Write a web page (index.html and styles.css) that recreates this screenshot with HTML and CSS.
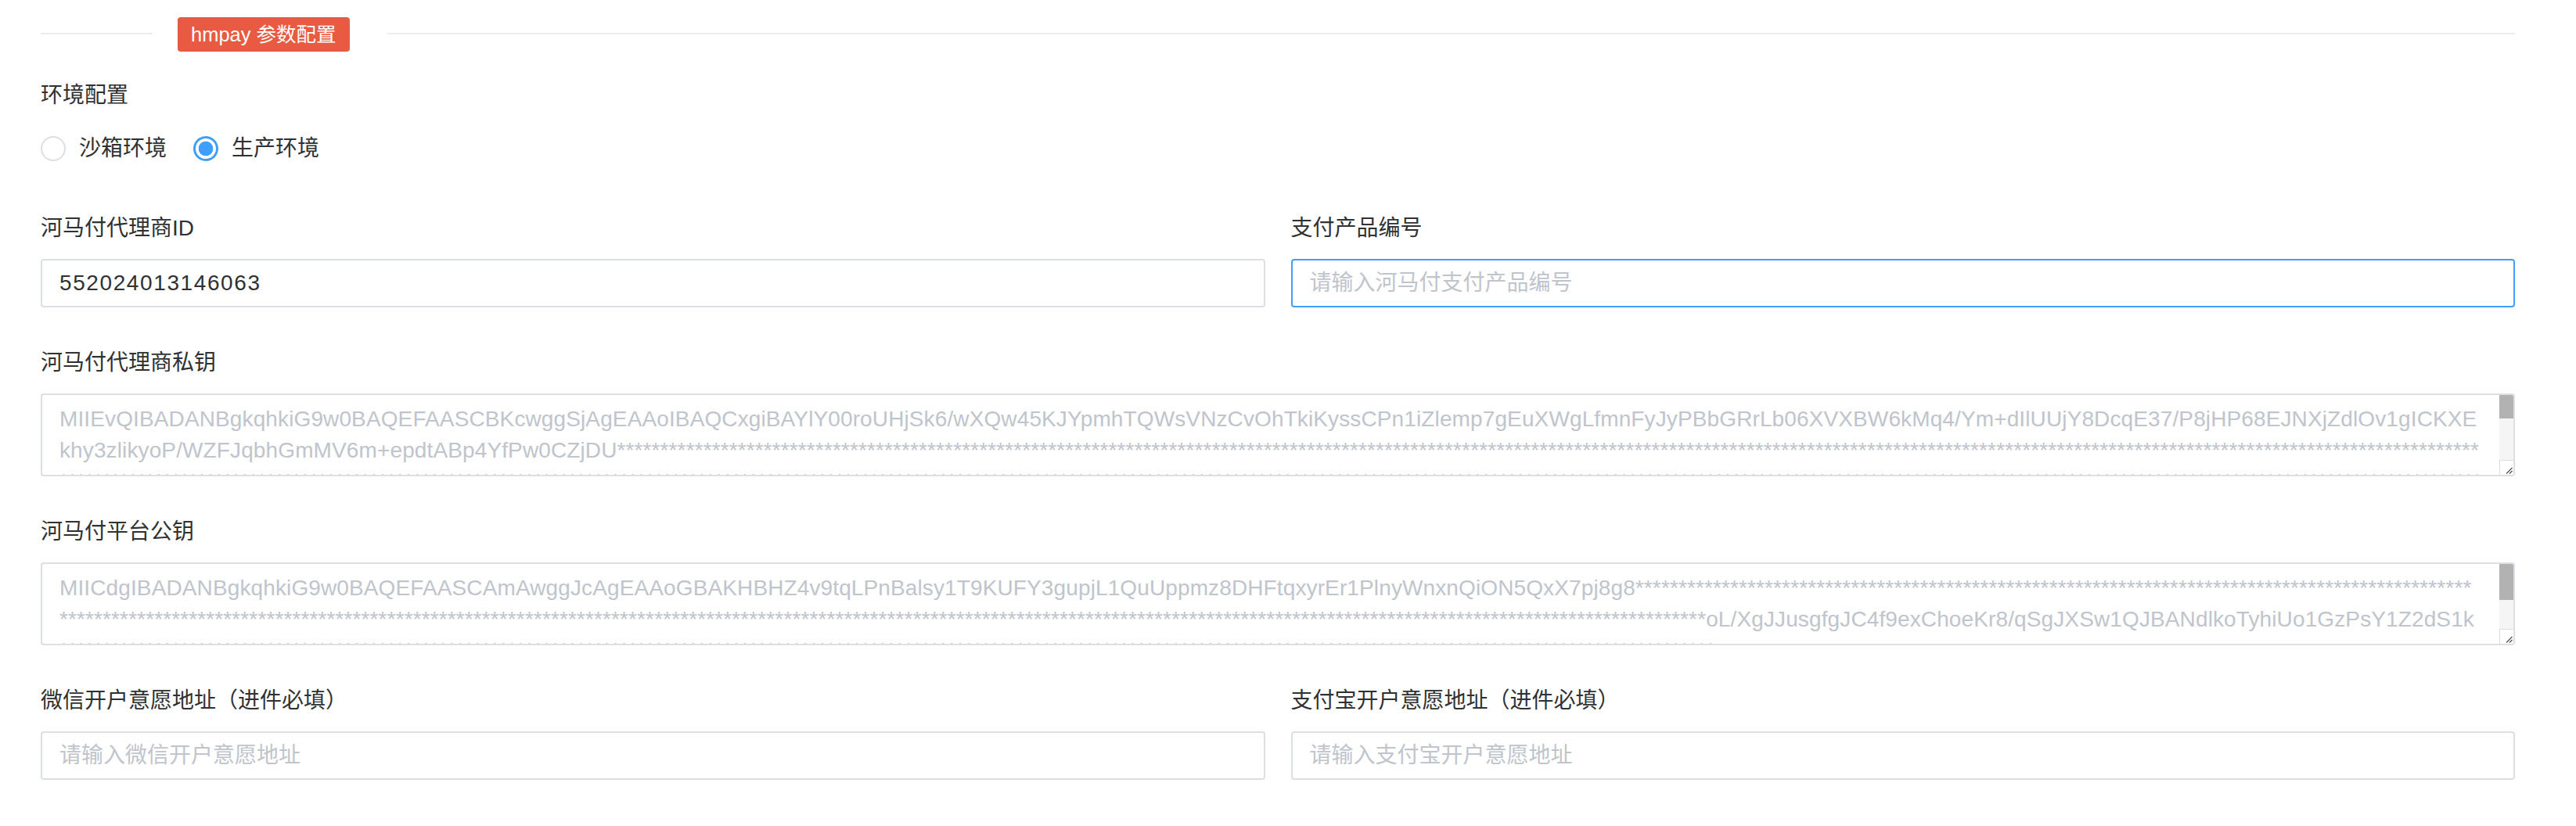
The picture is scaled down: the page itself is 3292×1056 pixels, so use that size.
FILE: index.html
```html
<!DOCTYPE html>
<html lang="zh-CN">
<head>
<meta charset="utf-8">
<title>hmpay 参数配置</title>
<link rel="stylesheet" href="styles.css">
</head>
<body>
<div class="page">
  <div class="divider">
    <span class="divider-line divider-line--lead"></span>
    <span class="divider-title">hmpay 参数配置</span>
    <span class="divider-line divider-line--rest"></span>
  </div>

  <div class="env">
    <div class="field-label">环境配置</div>
    <div class="radio-group">
      <label class="radio"><input type="radio" name="env" value="sandbox"><span>沙箱环境</span></label>
      <label class="radio"><input type="radio" name="env" value="production" checked><span>生产环境</span></label>
    </div>
  </div>

  <div class="form-grid">
    <div class="form-item">
      <label class="field-label" for="agentId">河马付代理商ID</label>
      <input class="text-input" id="agentId" type="text" value="552024013146063">
    </div>
    <div class="form-item">
      <label class="field-label" for="productNo">支付产品编号</label>
      <input class="text-input is-focus" id="productNo" type="text" placeholder="请输入河马付支付产品编号">
    </div>

    <div class="form-item form-item--wide">
      <label class="field-label" for="agentKey">河马付代理商私钥</label>
      <div class="key-box">
        <textarea class="key-area" id="agentKey" spellcheck="false">MIIEvQIBADANBgkqhkiG9w0BAQEFAASCBKcwggSjAgEAAoIBAQCxgiBAYlY00roUHjSk6/wXQw45KJYpmhTQWsVNzCvOhTkiKyssCPn1iZlemp7gEuXWgLfmnFyJyPBbGRrLb06XVXBW6kMq4/Ym+dIlUUjY8DcqE37/P8jHP68EJNXjZdlOv1gICKXE
khy3zlikyoP/WZFJqbhGmMV6m+epdtABp4YfPw0CZjDU************************************************************************************************************************************************************************************************************************************************************************************************************************************************************************************************************************************************************************************************************************************************************************************************************7Hq2xWbN0dKm4vRz8PuLs3TgYc1eQfJ9aXoE
Vn5kZr2Ti8LwQ0yA=</textarea>
        <div class="scrollbar" aria-hidden="true">
          <div class="scrollbar-track"><div class="scrollbar-thumb scrollbar-thumb--short"></div></div>
          <div class="resizer">
            <svg width="18" height="19" viewBox="0 0 18 19"><path d="M9 17.5 16.5 10M13 17.5 16.5 14" fill="none" stroke="#555" stroke-width="1.3"/></svg>
          </div>
        </div>
      </div>
    </div>

    <div class="form-item form-item--wide">
      <label class="field-label" for="platformKey">河马付平台公钥</label>
      <div class="key-box">
        <textarea class="key-area" id="platformKey" spellcheck="false">MIICdgIBADANBgkqhkiG9w0BAQEFAASCAmAwggJcAgEAAoGBAKHBHZ4v9tqLPnBalsy1T9KUFY3gupjL1QuUppmz8DHFtqxyrEr1PlnyWnxnQiON5QxX7pj8g8*************************************************************************************************
***********************************************************************************************************************************************************************************************oL/XgJJusgfgJC4f9exChoeKr8/qSgJXSw1QJBANdlkoTyhiUo1GzPsY1Z2dS1k
************************************************************************************************************************************************************************************************
Fq8tA2mWcR==</textarea>
        <div class="scrollbar" aria-hidden="true">
          <div class="scrollbar-track"><div class="scrollbar-thumb scrollbar-thumb--long"></div></div>
          <div class="resizer">
            <svg width="18" height="19" viewBox="0 0 18 19"><path d="M9 17.5 16.5 10M13 17.5 16.5 14" fill="none" stroke="#555" stroke-width="1.3"/></svg>
          </div>
        </div>
      </div>
    </div>

    <div class="form-item">
      <label class="field-label" for="wechatUrl">微信开户意愿地址（进件必填）</label>
      <input class="text-input" id="wechatUrl" type="text" placeholder="请输入微信开户意愿地址">
    </div>
    <div class="form-item">
      <label class="field-label" for="alipayUrl">支付宝开户意愿地址（进件必填）</label>
      <input class="text-input" id="alipayUrl" type="text" placeholder="请输入支付宝开户意愿地址">
    </div>
  </div>
</div>
</body>
</html>
```

FILE: styles.css
```css
html, body {
  margin: 0;
  background: #fff;
}

.page {
  padding: 22px 78px 40px 52px;
  font-family: "Liberation Sans", "Noto Sans CJK SC", sans-serif;
  color: #303133;
}

/* section divider with the red title tag */
.divider {
  display: flex;
  align-items: center;
  height: 44px;
}

.divider-line {
  height: 2px;
  background: #ececec;
  margin-bottom: 3px;
}

.divider-line--lead {
  width: 143px;
  margin-right: 32px;
}

.divider-line--rest {
  flex: 1;
  margin-left: 48px;
}

.divider-title {
  box-sizing: border-box;
  width: 220px;
  height: 44px;
  padding: 0 18px 0 17px;
  border-radius: 4px;
  background: #e85a42;
  color: #fff;
  font-size: 25.5px;
  line-height: 44px;
  white-space: nowrap;
}

.field-label {
  display: block;
  font-size: 28px;
  line-height: 40px;
  color: #303133;
}

.env {
  margin-top: 36px;
}

/* radio group */
.radio-group {
  display: flex;
  align-items: center;
  height: 40px;
  margin-top: 28px;
}

.radio {
  display: inline-flex;
  align-items: center;
  margin-right: 34px;
  font-size: 28px;
  line-height: 40px;
  cursor: pointer;
}

.radio input {
  appearance: none;
  -webkit-appearance: none;
  box-sizing: border-box;
  width: 32px;
  height: 32px;
  margin: 0 17px 0 0;
  border: 2px solid #dcdfe6;
  border-radius: 50%;
  background: #fff;
}

.radio input:checked {
  border: 3px solid #409eff;
  background: radial-gradient(circle, #409eff 0 9px, #fff 9.6px);
}

/* form grid */
.form-grid {
  display: grid;
  grid-template-columns: 1fr 1fr;
  column-gap: 33px;
  row-gap: 51px;
  margin-top: 62px;
}

.form-item--wide {
  grid-column: 1 / -1;
}

.form-item .field-label {
  margin-bottom: 19px;
}

.text-input {
  display: block;
  box-sizing: border-box;
  width: 100%;
  height: 62px;
  margin: 0;
  padding: 0 22px;
  border: 2px solid #dcdfe6;
  border-radius: 4px;
  background: #fff;
  font-family: inherit;
  font-size: 28px;
  letter-spacing: 1.6px;
  color: #303133;
  outline: none;
}

.text-input::placeholder {
  color: #c0c4cc;
  letter-spacing: 0;
}

.text-input.is-focus {
  border-color: #409eff;
}

/* key text areas with their scrollbar */
.key-box {
  position: relative;
}

.key-area {
  display: block;
  box-sizing: border-box;
  width: 100%;
  height: 106px;
  margin: 0;
  padding: 11px 40px 11px 22px;
  border: 2px solid #dcdfe6;
  border-radius: 4px;
  background: #fff;
  font-family: inherit;
  font-size: 28px;
  line-height: 40px;
  letter-spacing: 0.12px;
  color: #c0c4cc;
  white-space: pre-wrap;
  word-break: break-all;
  overflow: hidden;
  resize: none;
  outline: none;
}

.scrollbar {
  position: absolute;
  top: 2px;
  right: 2px;
  bottom: 2px;
  width: 18px;
  display: flex;
  flex-direction: column;
  border-top-right-radius: 2px;
  overflow: hidden;
}

.scrollbar-track {
  flex: 1;
  background: #f5f5f5;
}

.scrollbar-thumb {
  background: #b2b2b2;
}

.scrollbar-thumb--short {
  height: 30px;
}

.scrollbar-thumb--long {
  height: 46px;
}

.resizer {
  box-sizing: border-box;
  height: 19px;
  background: #fff;
  border-top: 1px solid #dedede;
  border-left: 1px solid #dedede;
}

.resizer svg {
  display: block;
  margin: -1px 0 0 -1px;
}
```
